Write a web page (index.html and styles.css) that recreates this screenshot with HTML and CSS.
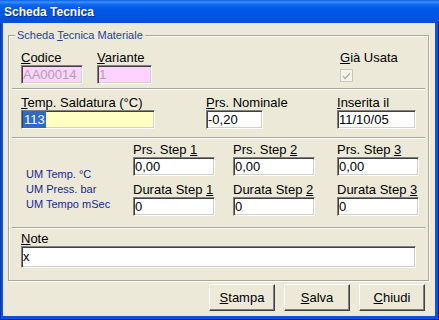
FILE: index.html
```html
<!DOCTYPE html>
<html>
<head>
  <title>Scheda Tecnica</title>
  <link rel="stylesheet" href="styles.css">
</head>
<body>
  <div class="window">
    <div class="titlebar">Scheda Tecnica</div>
    <div class="client">
      <fieldset class="group">
        <legend>Scheda <u>T</u>ecnica Materiale</legend>

        <!-- codice / variante / già usata -->
        <div class="row row-1">
          <div class="field f-codice">
            <span class="lbl"><u>C</u>odice</span>
            <div class="edit locked">AA00014</div>
          </div>
          <div class="field f-variante">
            <span class="lbl"><u>V</u>ariante</span>
            <div class="edit locked">1</div>
          </div>
          <div class="field f-gia">
            <span class="lbl"><u>G</u>ià Usata</span>
            <svg class="check" width="13" height="13" viewBox="0 0 13 13">
              <rect x="0.5" y="0.5" width="12" height="12" fill="#f5f4ea" stroke="#c9c7ba"/>
              <path d="M3 6 L5 8.5 L10 3.5 L10 5.5 L5 10.5 L3 8 Z" fill="#b3b09f"/>
            </svg>
          </div>
        </div>
        <div class="sep"></div>

        <!-- temperatura / pressione / data -->
        <div class="row row-2">
          <div class="field f-temp">
            <span class="lbl"><u>T</u>emp. Saldatura (°C)</span>
            <div class="edit yellow"><span class="sel">113</span></div>
          </div>
          <div class="field f-nominale">
            <span class="lbl"><u>P</u>rs. Nominale</span>
            <div class="edit">-0,20</div>
          </div>
          <div class="field f-data">
            <span class="lbl"><u>I</u>nserita il</span>
            <div class="edit">11/10/05</div>
          </div>
        </div>
        <div class="sep sep-2"></div>

        <!-- step -->
        <div class="row row-3">
          <div class="um">
            <span>UM Temp. °C</span>
            <span>UM Press. bar</span>
            <span>UM Tempo mSec</span>
          </div>
          <div class="steps">
            <div class="field step">
              <span class="lbl">Prs. Step <u>1</u></span>
              <div class="edit">0,00</div>
            </div>
            <div class="field step">
              <span class="lbl">Prs. Step <u>2</u></span>
              <div class="edit">0,00</div>
            </div>
            <div class="field step">
              <span class="lbl">Prs. Step <u>3</u></span>
              <div class="edit">0,00</div>
            </div>
            <div class="field step">
              <span class="lbl">Durata Step <u>1</u></span>
              <div class="edit">0</div>
            </div>
            <div class="field step">
              <span class="lbl">Durata Step <u>2</u></span>
              <div class="edit">0</div>
            </div>
            <div class="field step">
              <span class="lbl">Durata Step <u>3</u></span>
              <div class="edit">0</div>
            </div>
          </div>
        </div>
        <div class="sep sep-3"></div>

        <!-- note -->
        <div class="row row-4">
          <div class="field f-note">
            <span class="lbl"><u>N</u>ote</span>
            <div class="edit note">x</div>
          </div>
        </div>
      </fieldset>

      <div class="buttons">
        <button class="btn"><u>S</u>tampa</button>
        <button class="btn"><u>S</u>alva</button>
        <button class="btn"><u>C</u>hiudi</button>
      </div>
    </div>
  </div>
</body>
</html>
```

FILE: styles.css
```css
/* Finestra stile XP */
body {
  margin: 0;
  padding: 0;
  font-family: "Liberation Sans", Arial, sans-serif;
  font-size: 13px;
  color: #000;
  background: #fff;
}
.window {
  width: 439px;
  height: 320px;
  display: flex;
  flex-direction: column;
  background: #0a53df;
  box-shadow: inset 1px 0 0 #0831a8, inset -1px -1px 0 #00138c;
}
.titlebar {
  height: 23px;
  box-sizing: border-box;
  padding: 1px 0 0 4px;
  line-height: 22px;
  font-size: 12px;
  font-weight: bold;
  color: #fff;
  text-shadow: 1px 1px 0 #0a2b8f;
  background: linear-gradient(to bottom, #0a5ff0 0%, #3b8ff8 9%, #1168f0 20%, #0057e6 40%, #0054e3 75%, #0050d8 100%);
}
.client {
  flex: 1;
  margin: 0 4px 4px 3px;
  padding: 0 6px 0 5px;
  background: #ece9d8;
  display: flex;
  flex-direction: column;
}

/* Gruppo */
.group {
  margin: 6px 0 0;
  padding: 0 0 12px;
  border: 1px solid #aca899;
  box-shadow: inset 1px 1px 0 #fff, 1px 1px 0 #fff;
  min-width: 0;
}
.group legend {
  margin-left: 6px;
  padding: 0 2px;
  font-size: 11px;
  line-height: 13px;
  color: #1f3fa0;
  background: #ece9d8;
}
.sep {
  height: 0;
  margin: 4px 3px 0;
  border-top: 1px solid #aca899;
  border-bottom: 1px solid #fff;
}
.sep-2 {
  margin-top: 8px;
}
.sep-3 {
  margin-top: 11px;
}
.row {
  display: flex;
  padding-left: 12px;
}
.row-1 {
  padding-top: 8px;
}
.row-2 {
  padding-top: 5px;
}
.row-3 {
  padding-top: 3px;
}
.row-4 {
  padding-top: 2px;
}

/* Campi */
.field {
  display: flex;
  flex-direction: column;
}
.lbl {
  height: 15px;
  line-height: 15px;
  white-space: nowrap;
}
.edit {
  height: 19px;
  box-sizing: border-box;
  padding: 0 1px;
  line-height: 17px;
  white-space: nowrap;
  overflow: hidden;
  background: #fff;
  border: 1px solid;
  border-color: #808080 #fff #fff #808080;
  box-shadow: inset 1px 1px 0 #404040, inset -1px -1px 0 #d4d0c8;
}
.edit.locked {
  background: #ffd2ff;
  color: #a7a6aa;
}
.edit.yellow {
  background: #ffffc4;
}
.sel {
  display: inline-block;
  padding: 0 1px;
  background: #316ac5;
  color: #fff;
}
.f-codice {
  width: 62px;
  margin-right: 14px;
}
.f-variante {
  width: 55px;
}
.f-gia {
  margin-left: 188px;
}
.check {
  margin-top: 4px;
}
.f-temp {
  width: 134px;
  margin-right: 51px;
}
.f-nominale {
  width: 57px;
  margin-right: 74px;
}
.f-data {
  width: 79px;
}

/* Step */
.um {
  width: 107px;
  padding: 25px 0 0 5px;
  display: flex;
  flex-direction: column;
  font-size: 11px;
  line-height: 15px;
  color: #16288c;
  white-space: nowrap;
}
.steps {
  display: grid;
  grid-template-columns: 100px 104px 82px;
  row-gap: 6px;
}
.step .edit {
  width: 82px;
}
.f-note {
  width: 395px;
}
.edit.note {
  height: 22px;
  line-height: 20px;
}

/* Pulsanti */
.buttons {
  display: flex;
  justify-content: flex-end;
  gap: 9px;
  margin-top: 3px;
  padding-right: 4px;
}
.btn {
  width: 66px;
  height: 27px;
  padding: 0;
  font-family: "Liberation Sans", Arial, sans-serif;
  font-size: 13px;
  color: #000;
  background: #ece9d8;
  border: 1px solid;
  border-color: #fff #404040 #404040 #fff;
  box-shadow: inset -1px -1px 0 #808080;
}
```
